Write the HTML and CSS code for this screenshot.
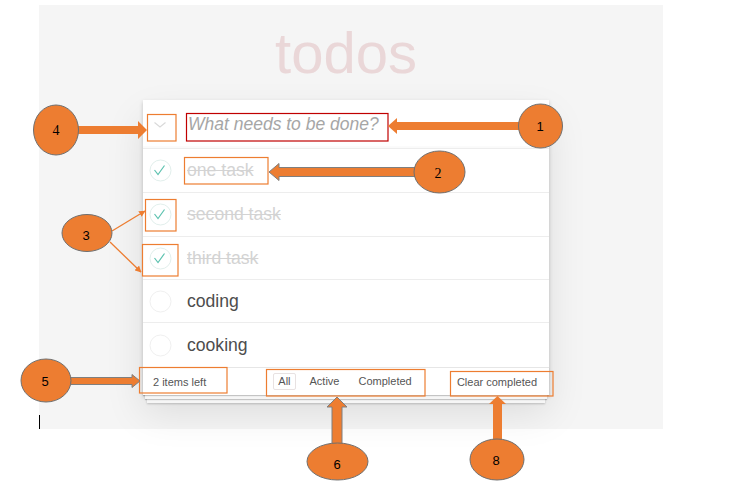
FILE: index.html
```html
<!DOCTYPE html>
<html lang="en">
<head>
<meta charset="utf-8">
<title>todos</title>
<link rel="stylesheet" href="styles.css">
</head>
<body>
<div class="stage">
  <main class="panel">
    <section class="app">
      <h1 class="title">todos</h1>
      <div class="card">
        <header class="new-row">
          <span class="toggle-all">
            <svg width="12" height="6" viewBox="0 0 12 6"><polyline points="0.5,0.5 6,5 11.5,0.5" fill="none" stroke="#d9d9d9" stroke-width="1.1"/></svg>
          </span>
          <input class="new-todo" placeholder="What needs to be done?">
        </header>
        <ul class="list">
          <li class="item done">
            <span class="toggle"><svg width="23" height="23" viewBox="0 0 23 23"><circle cx="11.5" cy="11.5" r="10.5" fill="none" stroke="#e2efec" stroke-width="1"/><path d="M5.5 11 L9 15.5 L15.5 6.5" fill="none" stroke="#5dc2af" stroke-width="1.2"/></svg></span>
            <span class="label">one task</span>
          </li>
          <li class="item done">
            <span class="toggle"><svg width="23" height="23" viewBox="0 0 23 23"><circle cx="11.5" cy="11.5" r="10.5" fill="none" stroke="#e2efec" stroke-width="1"/><path d="M5.5 11 L9 15.5 L15.5 6.5" fill="none" stroke="#5dc2af" stroke-width="1.2"/></svg></span>
            <span class="label">second task</span>
          </li>
          <li class="item done short">
            <span class="toggle"><svg width="23" height="23" viewBox="0 0 23 23"><circle cx="11.5" cy="11.5" r="10.5" fill="none" stroke="#e2efec" stroke-width="1"/><path d="M5.5 11 L9 15.5 L15.5 6.5" fill="none" stroke="#5dc2af" stroke-width="1.2"/></svg></span>
            <span class="label">third task</span>
          </li>
          <li class="item short">
            <span class="toggle"><svg width="23" height="23" viewBox="0 0 23 23"><circle cx="11.5" cy="11.5" r="10.5" fill="none" stroke="#f0f0f0" stroke-width="1"/></svg></span>
            <span class="label">coding</span>
          </li>
          <li class="item">
            <span class="toggle"><svg width="23" height="23" viewBox="0 0 23 23"><circle cx="11.5" cy="11.5" r="10.5" fill="none" stroke="#f0f0f0" stroke-width="1"/></svg></span>
            <span class="label">cooking</span>
          </li>
        </ul>
        <footer class="footer">
          <span class="count">2 items left</span>
          <ul class="filters">
            <li class="filter selected">All</li>
            <li class="filter">Active</li>
            <li class="filter">Completed</li>
          </ul>
          <span class="clear">Clear completed</span>
        </footer>
      </div>
    </section>
  </main>

  <svg class="annotations" width="732" height="495" viewBox="0 0 732 495">
    <defs>
      <marker id="tip" viewBox="0 0 10 10" refX="9" refY="5" markerWidth="5" markerHeight="5" orient="auto">
        <path d="M0 0 L10 5 L0 10 z" fill="#ed7d31"/>
      </marker>
    </defs>
    <!-- boxes -->
    <rect x="147.5" y="114.5" width="28.5" height="26.5" fill="none" stroke="#ed7d31" stroke-width="1.2"/>
    <rect x="186.5" y="113.5" width="201.5" height="27.5" fill="none" stroke="#c00000" stroke-width="1.2"/>
    <rect x="184.5" y="157.5" width="83.5" height="26.5" fill="none" stroke="#ed7d31" stroke-width="1.2"/>
    <rect x="145.5" y="199.5" width="30.5" height="31.5" fill="none" stroke="#ed7d31" stroke-width="1.2"/>
    <rect x="142.5" y="244.5" width="35.5" height="31.5" fill="none" stroke="#ed7d31" stroke-width="1.2"/>
    <rect x="139.5" y="367.5" width="87.5" height="25.5" fill="none" stroke="#ed7d31" stroke-width="1.2"/>
    <rect x="266.5" y="369.5" width="158.5" height="26.5" fill="none" stroke="#ed7d31" stroke-width="1.2"/>
    <rect x="450.5" y="371.5" width="102.5" height="24.5" fill="none" stroke="#ed7d31" stroke-width="1.2"/>

    <!-- arrows -->
    <polygon points="388,126 397,118 397,122 519,122 519,130 397,130 397,134" fill="#ed7d31"/>
    <polygon points="269,172 279,163.5 279,167.5 415,167.5 415,176.5 279,176.5 279,180.5" fill="#ed7d31" stroke="#7f7f7f" stroke-width="1"/>
    <polygon points="147,130 138,121 138,126 77,126 77,134 138,134 138,139" fill="#ed7d31"/>
    <polygon points="140,381 132,374.5 132,377.5 70,377.5 70,384.5 132,384.5 132,387.5" fill="#ed7d31" stroke="#7f7f7f" stroke-width="1"/>
    <polygon points="337,397 347,407 342,407 342,445 332,445 332,407 327,407" fill="#ed7d31" stroke="#7f7f7f" stroke-width="1"/>
    <polygon points="497.5,396 506,404 502,404 502,441 493,441 493,404 489,404" fill="#ed7d31"/>
    <line x1="112" y1="231" x2="145" y2="211" stroke="#ed7d31" stroke-width="1.3" marker-end="url(#tip)"/>
    <line x1="110" y1="242" x2="141" y2="272" stroke="#ed7d31" stroke-width="1.3" marker-end="url(#tip)"/>

    <!-- callouts -->
    <g fill="#ed7d31" stroke="#6f6f6f" stroke-width="1">
      <ellipse cx="540.5" cy="126" rx="22" ry="22"/>
      <ellipse cx="439.5" cy="172" rx="25.5" ry="21"/>
      <ellipse cx="87" cy="233" rx="25" ry="18.5"/>
      <ellipse cx="56" cy="130" rx="22.5" ry="25"/>
      <ellipse cx="46" cy="380.5" rx="25" ry="21.5"/>
      <ellipse cx="337.5" cy="461.5" rx="30.5" ry="18.5"/>
      <ellipse cx="497" cy="459.5" rx="27" ry="20.5"/>
    </g>
    <g class="num-sans" text-anchor="middle" fill="#000">
      <text x="540" y="131">1</text>
      <text x="86" y="240">3</text>
      <text x="45" y="386">5</text>
      <text x="337" y="469">6</text>
      <text x="496" y="465">8</text>
    </g>
    <g class="num-serif" text-anchor="middle" fill="#000">
      <text x="438" y="178">2</text>
      <text x="56" y="135">4</text>
    </g>
    <line x1="39.5" y1="415" x2="39.5" y2="429" stroke="#000" stroke-width="1"/>
  </svg>
</div>
</body>
</html>
```

FILE: styles.css
```css
* {
  box-sizing: border-box;
}

html,
body {
  margin: 0;
  background: #ffffff;
}

body {
  font-family: "Liberation Sans", Arial, sans-serif;
}

.stage {
  position: relative;
  width: 732px;
  height: 495px;
  padding: 5px 0 0 39px;
  overflow: hidden;
}

.panel {
  width: 624px;
  height: 424px;
  background: #f5f5f5;
  padding-top: 19px;
}

.app {
  width: 406px;
  margin-left: 104px;
}

.title {
  margin: 0;
  height: 58px;
  font-size: 58px;
  line-height: 58px;
  font-weight: normal;
  text-align: center;
  color: #ead7d8;
}

.card {
  margin-top: 18px;
  background: #ffffff;
  box-shadow: 0 2px 4px rgba(0, 0, 0, 0.2), 0 18px 37px rgba(0, 0, 0, 0.1);
}

.new-row {
  display: flex;
  align-items: center;
  height: 49px;
  border-bottom: 1px solid #ededed;
  box-shadow: inset 0 -2px 1px rgba(0, 0, 0, 0.02);
}

.toggle-all {
  width: 34px;
  display: flex;
  justify-content: center;
  padding-top: 1px;
}

.new-todo {
  margin-left: 9px;
  width: 330px;
  border: 0;
  padding: 0 0 0 2px;
  background: transparent;
  outline: none;
  font-family: "Liberation Sans", Arial, sans-serif;
  font-size: 17.5px;
  font-style: italic;
  color: #4d4d4d;
}

.new-todo::placeholder {
  color: #a6a6a6;
  font-style: italic;
}

.list {
  list-style: none;
  margin: 0;
  padding: 0;
}

.item {
  display: flex;
  align-items: center;
  height: 44px;
  border-bottom: 1px solid #ededed;
}

.item.short {
  height: 43px;
}

.item:last-child {
  height: 44px;
  border-bottom: 0;
}

.toggle {
  width: 34px;
  display: flex;
  justify-content: center;
}

.toggle svg {
  display: block;
}

.label {
  margin-left: 10px;
  font-size: 17.6px;
  color: #4d4d4d;
}

.item.done .label {
  color: #d3d3d3;
  text-decoration: line-through;
}

.footer {
  height: 28px;
  border-top: 1px solid #e6e6e6;
  display: grid;
  grid-template-columns: 1fr auto 1fr;
  align-items: center;
  padding: 0 12px 0 10px;
  font-size: 11px;
  color: #555555;
  box-shadow: 0 1px 1px rgba(0, 0, 0, 0.2),
    0 6px 0 -2px #f6f6f6,
    0 7px 1px -2px rgba(0, 0, 0, 0.2),
    0 12px 0 -4px #f6f6f6,
    0 13px 2px -4px rgba(0, 0, 0, 0.2);
}

.filters {
  display: flex;
  gap: 9px;
  list-style: none;
  margin: 0;
  padding: 0;
}

.filter {
  padding: 1px 4px;
  border: 1px solid transparent;
  border-radius: 2px;
  line-height: 13px;
}

.filter.selected {
  border-color: #e8e2e2;
}

.clear {
  justify-self: end;
}

.annotations {
  position: absolute;
  top: 0;
  left: 0;
  pointer-events: none;
}

.num-sans {
  font-family: "Liberation Sans", Arial, sans-serif;
  font-size: 13px;
}

.num-serif {
  font-family: "Liberation Serif", "Times New Roman", serif;
  font-size: 14px;
}
```
